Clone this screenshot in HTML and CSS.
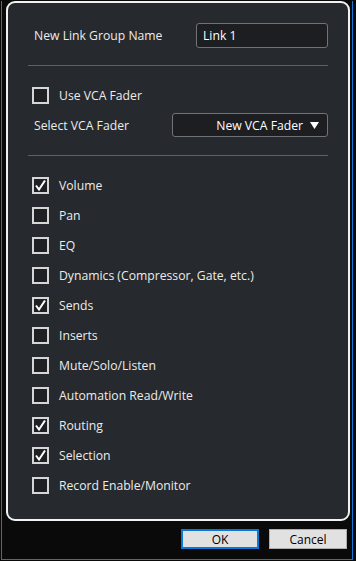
FILE: index.html
```html
<!DOCTYPE html>
<html lang="en">
<head>
    <meta charset="UTF-8">
    <meta name="viewport" content="width=device-width, initial-scale=1.0">
    <title>Link Group</title>
    <link rel="stylesheet" href="styles.css">
</head>
<body>
    <div class="window">
        <div class="panel">
            <div class="row name-row">
                <span class="label">New Link Group Name</span>
                <div class="text-input">Link 1</div>
            </div>
            <hr class="sep sep-top">

            <div class="row check-row">
                <span class="box"></span>
                <span class="check-label">Use VCA Fader</span>
            </div>
            <div class="row select-row">
                <span class="label">Select VCA Fader</span>
                <div class="dropdown">
                    <span>New VCA Fader</span>
                    <svg class="arrow" width="9" height="7" viewBox="0 0 9 7"><polygon points="0,0 9,0 4.5,7" fill="#fff"/></svg>
                </div>
            </div>
            <hr class="sep sep-mid">

            <div class="list">
                <div class="row check-row">
                    <span class="box checked"><svg width="13" height="13" viewBox="0 0 13 13"><polyline points="2,6.5 5,10.5 11,1.5" fill="none" stroke="#fff" stroke-width="2"/></svg></span>
                    <span class="check-label">Volume</span>
                </div>
                <div class="row check-row">
                    <span class="box"></span>
                    <span class="check-label">Pan</span>
                </div>
                <div class="row check-row">
                    <span class="box"></span>
                    <span class="check-label">EQ</span>
                </div>
                <div class="row check-row">
                    <span class="box"></span>
                    <span class="check-label">Dynamics (Compressor, Gate, etc.)</span>
                </div>
                <div class="row check-row">
                    <span class="box checked"><svg width="13" height="13" viewBox="0 0 13 13"><polyline points="2,6.5 5,10.5 11,1.5" fill="none" stroke="#fff" stroke-width="2"/></svg></span>
                    <span class="check-label">Sends</span>
                </div>
                <div class="row check-row">
                    <span class="box"></span>
                    <span class="check-label">Inserts</span>
                </div>
                <div class="row check-row">
                    <span class="box"></span>
                    <span class="check-label">Mute/Solo/Listen</span>
                </div>
                <div class="row check-row">
                    <span class="box"></span>
                    <span class="check-label">Automation Read/Write</span>
                </div>
                <div class="row check-row">
                    <span class="box checked"><svg width="13" height="13" viewBox="0 0 13 13"><polyline points="2,6.5 5,10.5 11,1.5" fill="none" stroke="#fff" stroke-width="2"/></svg></span>
                    <span class="check-label">Routing</span>
                </div>
                <div class="row check-row">
                    <span class="box checked"><svg width="13" height="13" viewBox="0 0 13 13"><polyline points="2,6.5 5,10.5 11,1.5" fill="none" stroke="#fff" stroke-width="2"/></svg></span>
                    <span class="check-label">Selection</span>
                </div>
                <div class="row check-row">
                    <span class="box"></span>
                    <span class="check-label">Record Enable/Monitor</span>
                </div>
            </div>
        </div>

        <div class="buttons">
            <button class="btn btn-ok">OK</button>
            <button class="btn">Cancel</button>
        </div>
    </div>
</body>
</html>
```

FILE: styles.css
```css
body{
    margin: 0px;
    background-color: #0a0a0a;
    font-family: 'Open Sans', 'Noto Sans', sans-serif;
    font-size: 12.2px;
    color: #ececec;
    width: 356px;
    height: 561px;
    overflow: hidden;
}
.window{
    margin-left: 1px;
    width: 350px;
    height: 558px;
    border: 1px solid #1478d4;
    border-top: none;
    background-color: #0a0a0a;
}
.panel{
    margin: 1px 0px 0px 4px;
    width: 300px;
    height: 516px;
    border: 2px solid #f2f2f2;
    border-radius: 9px;
    background-color: #26292d;
    padding: 0px 20px 0px 20px;
    box-sizing: content-box;
}
.row{
    display: flex;
    align-items: center;
}
.name-row{
    height: 25px;
    margin-top: 20px;
    justify-content: space-between;
}
.label{
    margin-left: 6px;
}
.text-input{
    width: 124px;
    height: 23px;
    line-height: 23px;
    padding-left: 6px;
    border: 1px solid #707275;
    border-radius: 3px;
    background-color: #1c1e21;
    color: #fff;
}
.sep{
    border: none;
    height: 1px;
    background-color: #5e6165;
    margin: 0px;
}
.sep-top{
    margin-top: 17px;
}
.sep-mid{
    margin-top: 15px;
}
.check-row{
    height: 30px;
}
.sep-top + .check-row{
    margin-top: 14px;
}
.box{
    width: 13px;
    height: 13px;
    margin-left: 4px;
    border: 2px solid #d6d6d6;
    background-color: #1e2024;
    display: flex;
}
.check-label{
    margin-left: 10px;
}
.select-row{
    height: 30px;
    justify-content: space-between;
}
.dropdown{
    width: 154px;
    height: 22px;
    border: 1px solid #707275;
    border-radius: 3px;
    background-color: #1c1e21;
    display: flex;
    align-items: center;
    justify-content: flex-end;
    color: #fff;
}
.arrow{
    margin-left: 7px;
    margin-right: 8px;
}
.list{
    margin-top: 14px;
}
.buttons{
    display: flex;
    justify-content: flex-end;
    gap: 10px;
    margin-top: 8px;
    margin-right: 5px;
}
.btn{
    width: 78px;
    height: 20px;
    border: 1px solid #adadad;
    background-color: #e1e1e1;
    font-family: 'Open Sans', 'Noto Sans', sans-serif;
    font-size: 12px;
    color: #000;
    padding: 0px;
}
.btn-ok{
    border: 2px solid #0a78d7;
}
```
